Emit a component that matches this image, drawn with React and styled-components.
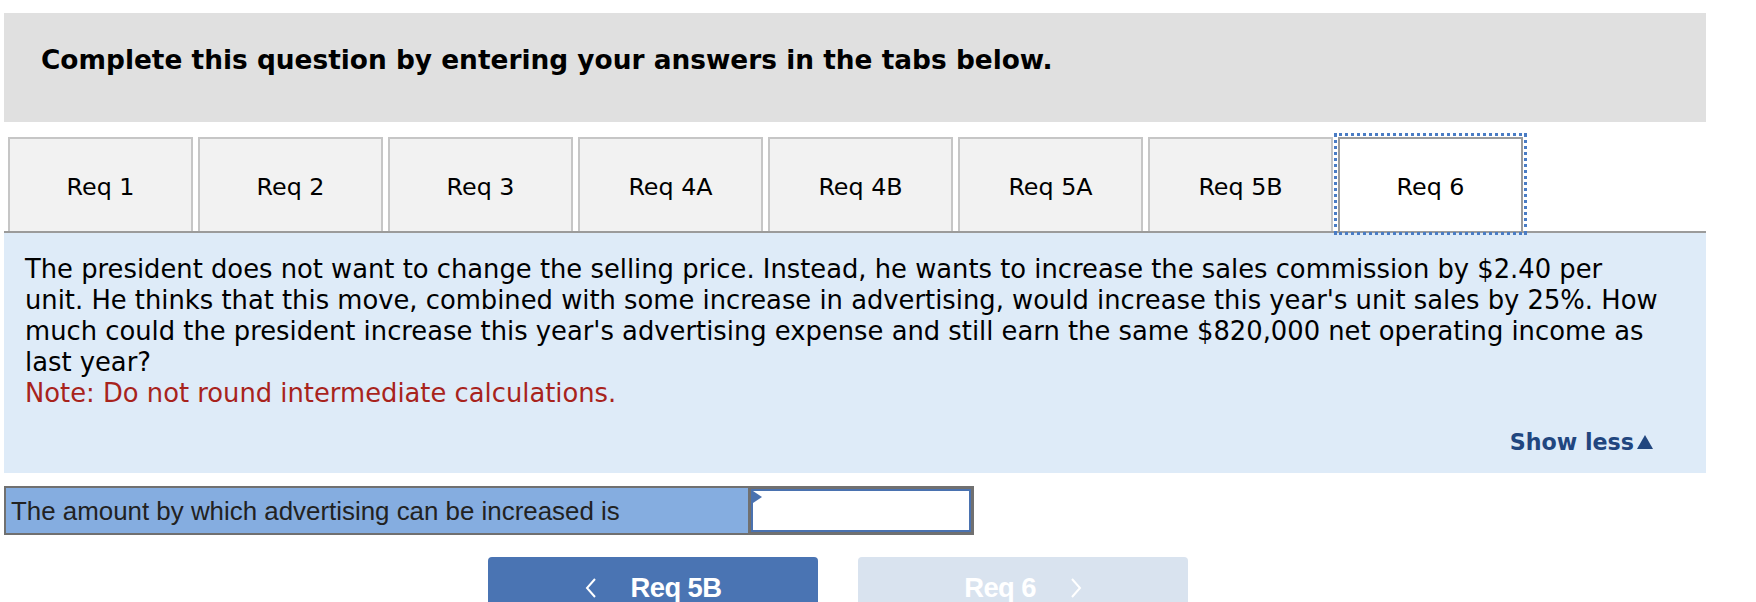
import React from "react";
import styled, { createGlobalStyle } from "styled-components";

const GlobalStyle = createGlobalStyle`
  html, body { margin: 0; padding: 0; background: #ffffff; }
  body { font-family: "DejaVu Sans", Verdana, sans-serif; color: #000; }
  * { box-sizing: border-box; }
`;

const Page = styled.div`
  width: 1706px;
  padding: 13px 0 0 4px;
`;

const Header = styled.div`
  height: 109px;
  background: #e0e0e0;
  display: flex;
  align-items: center;
  padding: 0 0 17px 37px;
  font-weight: bold;
  font-size: 26.4px;
  white-space: nowrap;
`;

const TabBar = styled.div`
  margin-top: 15px;
  display: flex;
  gap: 5px;
  padding-left: 4px;
  border-bottom: 2px solid #9b9b9b;
`;

const Tab = styled.div`
  width: 185px;
  height: 94px;
  display: flex;
  align-items: center;
  justify-content: center;
  padding-top: 4px;
  font-size: 23.8px;
  background: ${(p) => (p.$active ? "#ffffff" : "#f2f2f2")};
  border: 2px solid ${(p) => (p.$active ? "#9b9b9b" : "#c6c6c6")};
  border-bottom: none;
  outline: ${(p) => (p.$active ? "3px dotted #4a7cc4" : "none")};
  outline-offset: 1px;
  position: relative;
  z-index: ${(p) => (p.$active ? 1 : 0)};
  margin-bottom: ${(p) => (p.$active ? "-2px" : "0")};
`;

const Panel = styled.div`
  height: 240px;
  background: #deebf8;
  padding: 21px 20px 0 21px;
  display: flex;
  flex-direction: column;
`;

const Question = styled.div`
  font-size: 25.8px;
  line-height: 31px;
  white-space: nowrap;
`;

const Note = styled.span`
  color: #a8231c;
`;

const ShowLess = styled.div`
  margin-top: auto;
  margin-bottom: 18px;
  align-self: flex-end;
  margin-right: 32px;
  color: #21467f;
  font-weight: bold;
  font-size: 22.2px;
  display: flex;
  align-items: center;
  gap: 2px;
`;

const AnswerRow = styled.div`
  margin-top: 13px;
  display: flex;
  height: 49px;
`;

const AnswerLabel = styled.div`
  width: 744px;
  background: #85ade0;
  border: 2px solid #707070;
  border-right: none;
  display: flex;
  align-items: center;
  padding: 2px 0 0 5px;
  font-family: "Liberation Sans", Arial, sans-serif;
  font-size: 25.9px;
  color: #222;
  white-space: nowrap;
`;

const AnswerInput = styled.div`
  position: relative;
  width: 226px;
  background: #ffffff;
  border: 3px solid #707070;
  box-shadow: inset 0 0 0 2px #4a72b0;
`;

const Flag = styled.div`
  position: absolute;
  left: 2px;
  top: 2px;
  width: 0;
  height: 0;
  border-top: 6px solid transparent;
  border-bottom: 6px solid transparent;
  border-left: 9px solid #4a72b0;
`;

const Nav = styled.div`
  margin-top: 22px;
  display: flex;
  gap: 40px;
  padding-left: 484px;
`;

const NavButton = styled.div`
  width: 330px;
  height: 62px;
  border-radius: 4px 4px 0 0;
  background: ${(p) => (p.$disabled ? "#d9e3ef" : "#4a74b3")};
  color: #ffffff;
  display: flex;
  align-items: center;
  justify-content: center;
  gap: 34px;
  font-family: "Liberation Sans", Arial, sans-serif;
  font-weight: bold;
  font-size: 27.4px;
  letter-spacing: -0.6px;
`;

const Chevron = ({ dir }) => (
  <svg width="12" height="20" viewBox="0 0 12 20">
    <path
      d={dir === "left" ? "M10 1 L2 10 L10 19" : "M2 1 L10 10 L2 19"}
      fill="none"
      stroke="#ffffff"
      strokeWidth="2"
    />
  </svg>
);

const tabs = ["Req 1", "Req 2", "Req 3", "Req 4A", "Req 4B", "Req 5A", "Req 5B", "Req 6"];

export default function App() {
  return (
    <>
      <GlobalStyle />
      <Page>
        <Header>Complete this question by entering your answers in the tabs below.</Header>
        <TabBar>
          {tabs.map((t) => (
            <Tab key={t} $active={t === "Req 6"}>
              {t}
            </Tab>
          ))}
        </TabBar>
        <Panel>
          <Question>
            The president does not want to change the selling price. Instead, he wants to increase the sales commission by $2.40 per
            <br />
            unit. He thinks that this move, combined with some increase in advertising, would increase this year's unit sales by 25%. How
            <br />
            much could the president increase this year's advertising expense and still earn the same $820,000 net operating income as
            <br />
            last year?
            <br />
            <Note>Note: Do not round intermediate calculations.</Note>
          </Question>
          <ShowLess>
            Show less
            <svg width="18" height="16" viewBox="0 0 18 16">
              <path d="M9 1 L17 15 L1 15 Z" fill="#21467f" />
            </svg>
          </ShowLess>
        </Panel>
        <AnswerRow>
          <AnswerLabel>The amount by which advertising can be increased is</AnswerLabel>
          <AnswerInput>
            <Flag />
          </AnswerInput>
        </AnswerRow>
        <Nav>
          <NavButton>
            <Chevron dir="left" />
            <span>Req 5B</span>
          </NavButton>
          <NavButton $disabled>
            <span>Req 6</span>
            <Chevron dir="right" />
          </NavButton>
        </Nav>
      </Page>
    </>
  );
}
